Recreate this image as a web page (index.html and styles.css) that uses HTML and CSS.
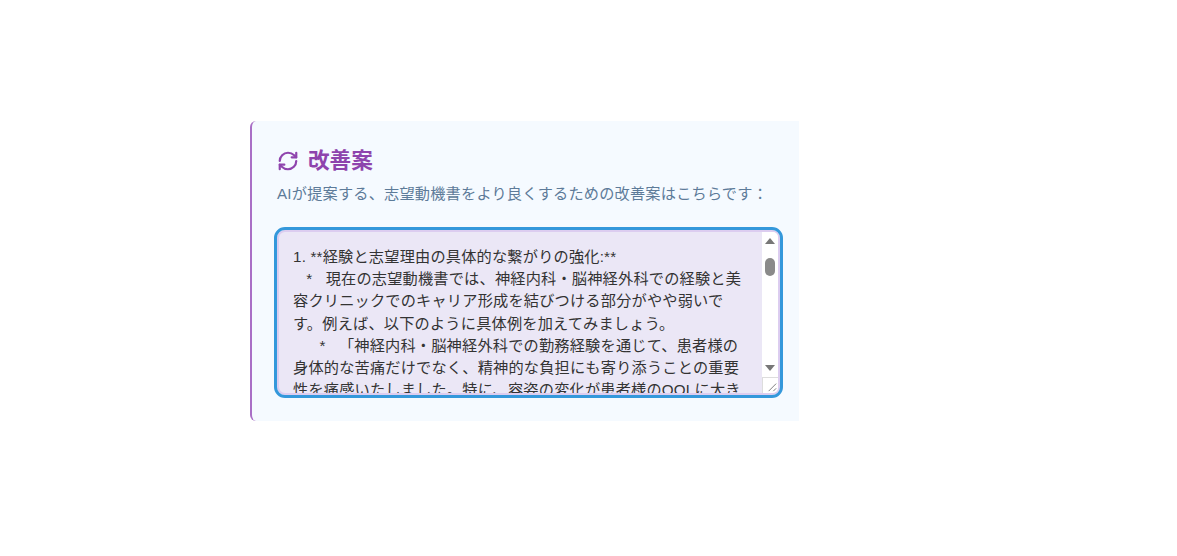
FILE: index.html

```html
<!DOCTYPE html>
<html lang="ja">
<head>
  <meta charset="UTF-8" />
  <meta name="viewport" content="width=device-width, initial-scale=1.0"/>
  <title>改善案</title>
  <link rel="stylesheet" href="styles.css">
</head>
<body>
  <div class="card">
    <h2 class="card-title">
      <svg class="title-icon" viewBox="0 0 24 24" aria-hidden="true">
        <path d="M3 12a9 9 0 0 1 9-9 9.75 9.75 0 0 1 6.74 2.74L21 8"/>
        <path d="M21 3v5h-5"/>
        <path d="M21 12a9 9 0 0 1-9 9 9.75 9.75 0 0 1-6.74-2.74L3 16"/>
        <path d="M8 16H3v5"/>
      </svg>
      改善案
    </h2>
    <p class="card-desc">AIが提案する、志望動機書をより良くするための改善案はこちらです：</p>
    <div class="text-wrap">
      <textarea class="result-text" readonly>1. **経験と志望理由の具体的な繋がりの強化:**
   *   現在の志望動機書では、神経内科・脳神経外科での経験と美容クリニックでのキャリア形成を結びつける部分がやや弱いです。例えば、以下のように具体例を加えてみましょう。
      *   「神経内科・脳神経外科での勤務経験を通じて、患者様の身体的な苦痛だけでなく、精神的な負担にも寄り添うことの重要性を痛感いたしました。特に、容姿の変化が患者様のQOLに大きく影響する場面を多く経験し、外見の悩みを解消することが心の健康にもつながると実感しております。」
   *   このように、過去の経験から得た気づきを美容医療への関心に結びつけると、志望理由に説得力が生まれます。

2. **貴院を志望する理由の明確化:**
   *   どのクリニックにも当てはまる表現を避け、貴院の理念や治療方針、症例の特徴などに触れると、入職への熱意がより伝わります。</textarea>
      <div class="scrollbar" aria-hidden="true">
        <span class="arrow-up"></span>
        <span class="thumb"></span>
        <span class="arrow-down"></span>
        <span class="resizer">
          <svg viewBox="0 0 16 16"><path d="M6 14 14 6M11 14 14 11"/></svg>
        </span>
      </div>
    </div>
  </div>
</body>
</html>
```

FILE: styles.css

```css
* {
  box-sizing: border-box;
}
body {
  margin: 0;
  min-height: 556px;
  background-color: white;
  font-family: "Liberation Sans", "Noto Sans CJK JP", sans-serif;
  padding: 121px 0 0 250px;
}
.card {
  width: 549px;
  height: 300px;
  background-color: #f5faff;
  border-left: 2px solid #a96fc6;
  border-radius: 6px 0 0 6px;
  padding: 25px;
}
.card-title {
  display: flex;
  align-items: center;
  gap: 9px;
  margin: 0 0 7px;
  font-size: 21.6px;
  line-height: 30px;
  font-weight: 700;
  color: #8e44ad;
}
.title-icon {
  width: 22px;
  height: 22px;
  fill: none;
  stroke: #8e44ad;
  stroke-width: 2.4;
  stroke-linecap: round;
  stroke-linejoin: round;
}
.card-desc {
  margin: 0 0 25px;
  font-size: 15.2px;
  letter-spacing: 0.2px;
  line-height: 22px;
  color: #5d7b99;
}
.text-wrap {
  position: relative;
  width: 503px;
  height: 165px;
}
.result-text {
  display: block;
  width: 100%;
  height: 100%;
  padding: 14px 30px 14px 14px;
  background-color: #ebe7f6;
  border: 2px solid #dccdf0;
  border-radius: 8px;
  outline: 3px solid #3498db;
  overflow: hidden;
  resize: none;
  font-family: inherit;
  font-size: 15.2px;
  letter-spacing: 0.2px;
  line-height: 22.2px;
  color: #333;
}
.scrollbar {
  position: absolute;
  top: 2px;
  right: 2px;
  bottom: 2px;
  width: 16px;
  background-color: white;
  border-radius: 0 5px 5px 0;
}
.thumb {
  position: absolute;
  top: 26px;
  left: 3px;
  width: 10px;
  height: 18px;
  background-color: #8a8a8a;
  border-radius: 5px;
}
.arrow-up,
.arrow-down {
  position: absolute;
  left: 3px;
  border-left: 5px solid transparent;
  border-right: 5px solid transparent;
}
.arrow-up {
  top: 6px;
  border-bottom: 6px solid #777;
}
.arrow-down {
  bottom: 22px;
  border-top: 6px solid #777;
}
.resizer {
  position: absolute;
  right: 0;
  bottom: 0;
  width: 16px;
  height: 16px;
  border-top: 1px solid #ddd;
  border-left: 1px solid #ddd;
}
.resizer svg {
  display: block;
  width: 15px;
  height: 15px;
  fill: none;
  stroke: #777;
}
```
